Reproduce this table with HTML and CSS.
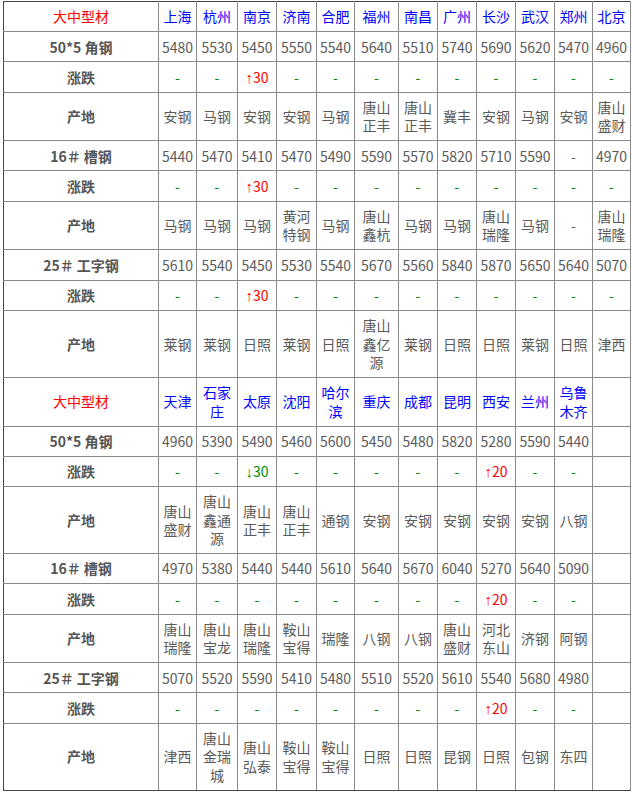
FILE: index.html
```html
<!DOCTYPE html>
<html lang="zh-CN">
<head>
<meta charset="utf-8">
<title>大中型材</title>
<link rel="stylesheet" href="styles.css">
</head>
<body>
<table class="price">
<colgroup>
<col class="c0"><col class="c38"><col class="c41"><col class="c39"><col class="c40"><col class="c38"><col class="c44"><col class="c39"><col class="c39"><col class="c39"><col class="c39"><col class="c38"><col class="c38">
</colgroup>
<tbody>
<tr><td class="corner">大中型材</td><td class="city">上海</td><td class="city">杭州</td><td class="city">南京</td><td class="city">济南</td><td class="city">合肥</td><td class="city">福州</td><td class="city">南昌</td><td class="city">广州</td><td class="city">长沙</td><td class="city">武汉</td><td class="city">郑州</td><td class="city">北京</td></tr>
<tr><td class="label">50*5 角钢</td><td>5480</td><td>5530</td><td>5450</td><td>5550</td><td>5540</td><td>5640</td><td>5510</td><td>5740</td><td>5690</td><td>5620</td><td>5470</td><td>4960</td></tr>
<tr><td class="label">涨跌</td><td class="z">-</td><td class="z">-</td><td class="up"><span class="arr">↑</span>30</td><td class="z">-</td><td class="z">-</td><td class="z">-</td><td class="z">-</td><td class="z">-</td><td class="z">-</td><td class="z">-</td><td class="z">-</td><td class="z">-</td></tr>
<tr><td class="label">产地</td><td>安钢</td><td>马钢</td><td>安钢</td><td>安钢</td><td>马钢</td><td>唐山正丰</td><td>唐山正丰</td><td>冀丰</td><td>安钢</td><td>马钢</td><td>安钢</td><td>唐山盛财</td></tr>
<tr><td class="label">16＃ 槽钢</td><td>5440</td><td>5470</td><td>5410</td><td>5470</td><td>5490</td><td>5590</td><td>5570</td><td>5820</td><td>5710</td><td>5590</td><td>-</td><td>4970</td></tr>
<tr><td class="label">涨跌</td><td class="z">-</td><td class="z">-</td><td class="up"><span class="arr">↑</span>30</td><td class="z">-</td><td class="z">-</td><td class="z">-</td><td class="z">-</td><td class="z">-</td><td class="z">-</td><td class="z">-</td><td class="z">-</td><td class="z">-</td></tr>
<tr><td class="label">产地</td><td>马钢</td><td>马钢</td><td>马钢</td><td>黄河特钢</td><td>马钢</td><td>唐山鑫杭</td><td>马钢</td><td>马钢</td><td>唐山瑞隆</td><td>马钢</td><td>-</td><td>唐山瑞隆</td></tr>
<tr><td class="label">25＃ 工字钢</td><td>5610</td><td>5540</td><td>5450</td><td>5530</td><td>5540</td><td>5670</td><td>5560</td><td>5840</td><td>5870</td><td>5650</td><td>5640</td><td>5070</td></tr>
<tr><td class="label">涨跌</td><td class="z">-</td><td class="z">-</td><td class="up"><span class="arr">↑</span>30</td><td class="z">-</td><td class="z">-</td><td class="z">-</td><td class="z">-</td><td class="z">-</td><td class="z">-</td><td class="z">-</td><td class="z">-</td><td class="z">-</td></tr>
<tr><td class="label">产地</td><td>莱钢</td><td>莱钢</td><td>日照</td><td>莱钢</td><td>日照</td><td>唐山鑫亿源</td><td>莱钢</td><td>日照</td><td>日照</td><td>莱钢</td><td>日照</td><td>津西</td></tr>
<tr><td class="corner">大中型材</td><td class="city">天津</td><td class="city">石家庄</td><td class="city">太原</td><td class="city">沈阳</td><td class="city">哈尔滨</td><td class="city">重庆</td><td class="city">成都</td><td class="city">昆明</td><td class="city">西安</td><td class="city">兰州</td><td class="city">乌鲁木齐</td><td></td></tr>
<tr><td class="label">50*5 角钢</td><td>4960</td><td>5390</td><td>5490</td><td>5460</td><td>5600</td><td>5450</td><td>5480</td><td>5820</td><td>5280</td><td>5590</td><td>5440</td><td></td></tr>
<tr><td class="label">涨跌</td><td class="z">-</td><td class="z">-</td><td class="down"><span class="arr">↓</span>30</td><td class="z">-</td><td class="z">-</td><td class="z">-</td><td class="z">-</td><td class="z">-</td><td class="up"><span class="arr">↑</span>20</td><td class="z">-</td><td class="z">-</td><td></td></tr>
<tr><td class="label">产地</td><td>唐山盛财</td><td>唐山鑫通源</td><td>唐山正丰</td><td>唐山正丰</td><td>通钢</td><td>安钢</td><td>安钢</td><td>安钢</td><td>安钢</td><td>安钢</td><td>八钢</td><td></td></tr>
<tr><td class="label">16＃ 槽钢</td><td>4970</td><td>5380</td><td>5440</td><td>5440</td><td>5610</td><td>5640</td><td>5670</td><td>6040</td><td>5270</td><td>5640</td><td>5090</td><td></td></tr>
<tr><td class="label">涨跌</td><td class="z">-</td><td class="z">-</td><td class="z">-</td><td class="z">-</td><td class="z">-</td><td class="z">-</td><td class="z">-</td><td class="z">-</td><td class="up"><span class="arr">↑</span>20</td><td class="z">-</td><td class="z">-</td><td></td></tr>
<tr><td class="label">产地</td><td>唐山瑞隆</td><td>唐山宝龙</td><td>唐山瑞隆</td><td>鞍山宝得</td><td>瑞隆</td><td>八钢</td><td>八钢</td><td>唐山盛财</td><td>河北东山</td><td>济钢</td><td>阿钢</td><td></td></tr>
<tr><td class="label">25＃ 工字钢</td><td>5070</td><td>5520</td><td>5590</td><td>5410</td><td>5480</td><td>5510</td><td>5520</td><td>5610</td><td>5540</td><td>5680</td><td>4980</td><td></td></tr>
<tr><td class="label">涨跌</td><td class="z">-</td><td class="z">-</td><td class="z">-</td><td class="z">-</td><td class="z">-</td><td class="z">-</td><td class="z">-</td><td class="z">-</td><td class="up"><span class="arr">↑</span>20</td><td class="z">-</td><td class="z">-</td><td></td></tr>
<tr><td class="label">产地</td><td>津西</td><td>唐山金瑞城</td><td>唐山弘泰</td><td>鞍山宝得</td><td>鞍山宝得</td><td>日照</td><td>日照</td><td>昆钢</td><td>日照</td><td>包钢</td><td>东四</td><td></td></tr>
</tbody>
</table>
</body>
</html>
```
FILE: styles.css
```css
html, body {
  margin: 0;
  padding: 0;
  background: #ffffff;
}

body {
  font-family: "Noto Sans CJK SC", "Noto Sans", sans-serif;
  font-size: 14px;
  color: #555555;
}

.price {
  margin: 1px 0 0 3px;
  width: 628px;
  table-layout: fixed;
  border-collapse: collapse;
  border: 1px solid #444444;
}

.c0 { width: 155px; }
.c38 { width: 38px; }
.c39 { width: 39px; }
.c40 { width: 40px; }
.c41 { width: 41px; }
.c44 { width: 44px; }

.price td {
  border: 1px solid #8a8a8a;
  padding: 5.35px 2px;
  line-height: 18.5px;
  text-align: center;
  vertical-align: middle;
  color: #5a5a5a;
}

.price tr:first-child td { border-top-color: #444444; }
.price tr:last-child td { border-bottom-color: #444444; }
.price td:first-child { border-left-color: #444444; }

.price td.corner {
  color: #ff0000;
}

.price td.city {
  color: #0000ff;
}

.price td.label {
  font-weight: bold;
  color: #555555;
}

.price td.z {
  color: #008a00;
}

.price td.up {
  color: #ff0000;
}

.price td.down {
  color: #008a00;
}

.arr {
  font-family: "Liberation Sans", "DejaVu Sans", sans-serif;
  font-size: 15px;
  line-height: 0;
}
```
